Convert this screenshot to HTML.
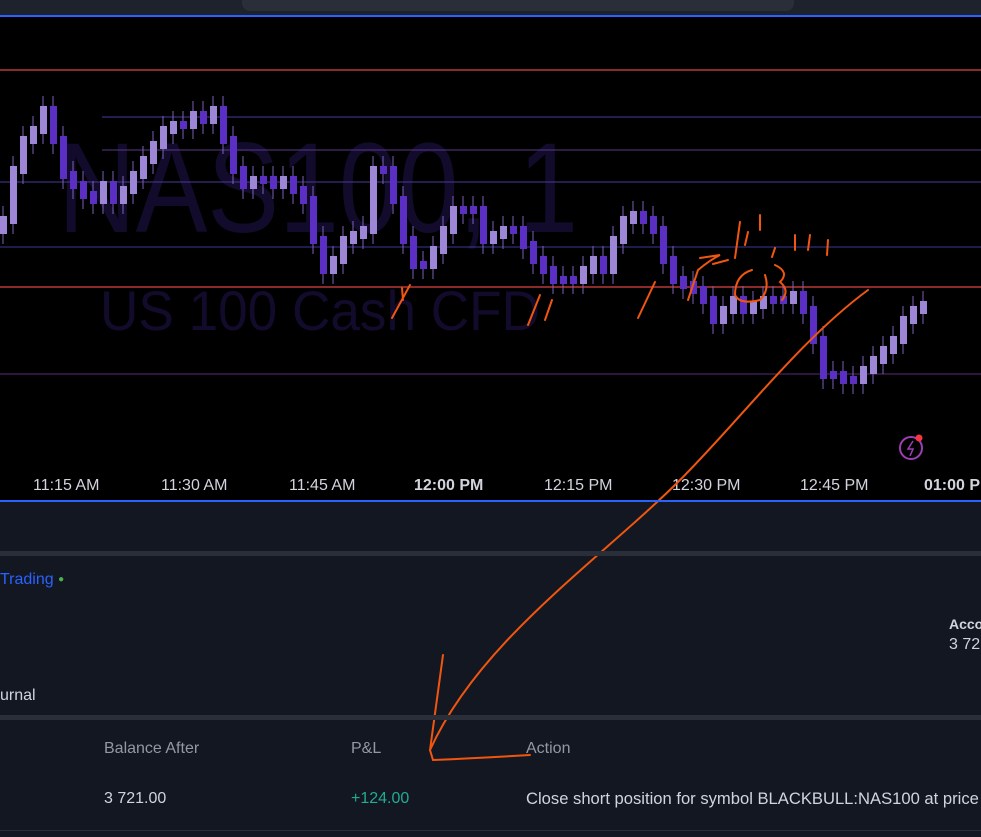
<!DOCTYPE html>
<html><head><meta charset="utf-8"><style>
body{margin:0;width:981px;height:837px;overflow:hidden;background:#131722;font-family:"Liberation Sans",sans-serif;position:relative}
.a{position:absolute;white-space:nowrap}
</style></head><body>
<div class="a" style="left:0;top:0;width:981px;height:15px;background:#1e222d"></div>
<div class="a" style="left:242px;top:0;width:552px;height:11px;background:#2a2e39;border-radius:0 0 8px 8px"></div>
<div class="a" style="left:0;top:15px;width:981px;height:2px;background:#2962ff"></div>
<div class="a" style="left:0;top:17px;width:981px;height:483px;background:#000"></div>
<svg class="a" style="left:0;top:0" width="981" height="837" id="s">
<text x="58" y="232" font-family="Liberation Sans" font-size="128" fill="#120b2c" textLength="520" lengthAdjust="spacingAndGlyphs">NAS100, 1</text>
<text x="100" y="330" font-family="Liberation Sans" font-size="56" fill="#120b2c" textLength="440" lengthAdjust="spacingAndGlyphs">US 100 Cash CFD</text>
<line x1="0" y1="70" x2="981" y2="70" stroke="#8a2a2a" stroke-width="2"/>
<line x1="102" y1="117" x2="981" y2="117" stroke="#4a3a9a" stroke-width="1"/>
<line x1="102" y1="150" x2="981" y2="150" stroke="#5a3a8a" stroke-width="1"/>
<line x1="0" y1="182" x2="981" y2="182" stroke="#4a3a9a" stroke-width="1"/>
<line x1="0" y1="247" x2="981" y2="247" stroke="#3a3a9a" stroke-width="1"/>
<line x1="0" y1="287" x2="981" y2="287" stroke="#8a2a2a" stroke-width="2"/>
<line x1="0" y1="374" x2="981" y2="374" stroke="#5a2a7a" stroke-width="1"/>
<g id="c"></g>
<g fill="#d1d4dc" font-size="16" font-family="Liberation Sans">
<text x="33" y="490">11:15 AM</text><text x="161" y="490">11:30 AM</text><text x="289" y="490">11:45 AM</text>
<text x="414" y="490" font-weight="bold">12:00 PM</text><text x="544" y="490">12:15 PM</text><text x="672" y="490">12:30 PM</text>
<text x="800" y="490">12:45 PM</text><text x="924" y="490" font-weight="bold">01:00 PM</text></g>
<circle cx="911" cy="448" r="11" fill="none" stroke="#9c3fb5" stroke-width="2"/>
<path d="M913 441l-5 8h5l-3 7" fill="none" stroke="#9c3fb5" stroke-width="1.5"/>
<circle cx="919" cy="438" r="3.5" fill="#f23645"/>
<g fill="none" stroke="#f0560f" stroke-width="2" stroke-linecap="round">
<path d="M868 290 C800 340,740 420,680 480 C600 560,480 640,430 750"/>
<path d="M443 655 L430 750 L433 760 Q480 758 530 755"/>
<path d="M392 318 L410 285 M403 300 L402 288"/>
<path d="M528 325 L540 295 M545 320 L552 300"/>
<path d="M638 318 L655 282 M688 300 L698 270 Q710 260 720 255 L700 258"/>
<path d="M735 258 L740 222 M745 245 L748 232 M760 230 L760 215 M772 257 L775 248 M795 250 L795 235 M808 250 L810 235 M827 255 L828 240"/>
<path d="M752 270 Q735 275 735 295 Q740 305 760 300 Q770 290 765 275 M775 265 Q790 272 780 282 Q790 290 782 300"/>
<path d="M713 264 L728 260"/>
</g>
</svg>
<div class="a" style="left:0;top:500px;width:981px;height:2px;background:#2962ff"></div>
<div class="a" style="left:0;top:551px;width:981px;height:5px;background:#2a2e39"></div>
<div class="a" style="left:0;top:571px;color:#2962ff;font-size:16px">Trading <span style="color:#4caf50;font-size:10px;vertical-align:2px">●</span></div>
<div class="a" style="left:949px;top:616px;color:#d1d4dc;font-size:14px;font-weight:bold">Acco</div>
<div class="a" style="left:949px;top:636px;color:#d1d4dc;font-size:16px">3 72</div>
<div class="a" style="left:0;top:687px;color:#d1d4dc;font-size:16px">urnal</div>
<div class="a" style="left:0;top:715px;width:981px;height:5px;background:#2a2e39"></div>
<div class="a" style="left:104px;top:740px;color:#9598a1;font-size:16px">Balance After</div>
<div class="a" style="left:351px;top:740px;color:#9598a1;font-size:16px">P&amp;L</div>
<div class="a" style="left:526px;top:740px;color:#9598a1;font-size:16px">Action</div>
<div class="a" style="left:104px;top:790px;color:#d1d4dc;font-size:16px">3 721.00</div>
<div class="a" style="left:351px;top:790px;color:#22ab94;font-size:16px">+124.00</div>
<div class="a" style="left:526px;top:789px;color:#d1d4dc;font-size:16.6px">Close short position for symbol BLACKBULL:NAS100 at price</div>
<div class="a" style="left:0;top:830px;width:981px;height:1px;background:#2a2e39"></div>
<script>
var p=[220,170,140,130,110,140,175,185,195,200,185,200,190,175,160,145,130,125,125,115,120,110,140,170,185,180,180,185,180,190,200,240,270,260,240,235,230,170,170,200,240,265,265,250,230,210,210,210,240,235,230,230,245,260,270,280,280,280,270,260,270,240,220,215,220,230,260,280,285,290,300,320,310,300,310,305,300,300,300,295,310,340,375,375,380,380,370,360,350,340,320,310,305];
var s='',prev=p[0]+10;
for(var i=0;i<p.length;i++){var x=i*10,c=p[i],o=prev,t=Math.min(o,c)-4,b=Math.max(o,c)+4;var up=c<o;
s+='<line x1="'+(x+3)+'" y1="'+(t-10)+'" x2="'+(x+3)+'" y2="'+(b+10)+'" stroke="#7a62b8" stroke-width="1"/>';
s+='<rect x="'+x+'" y="'+t+'" width="7" height="'+(b-t)+'" fill="'+(up?'#9d86d6':'#5b2fc4')+'"/>';prev=c;}
document.getElementById('c').innerHTML=s;
</script>
</body></html>
